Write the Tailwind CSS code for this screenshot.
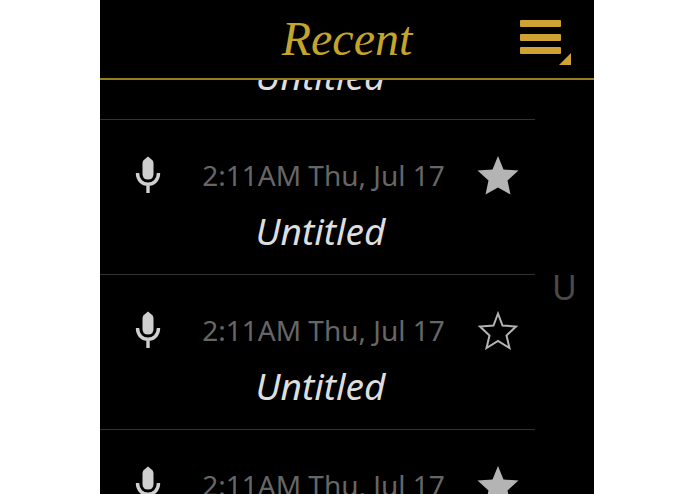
<!DOCTYPE html>
<html lang="en">
<head>
    <meta charset="UTF-8">
    <meta name="viewport" content="width=device-width, initial-scale=1.0">
    <title>Recent</title>
    <script src="https://cdn.jsdelivr.net/npm/@tailwindcss/browser@4"></script>
</head>
<body class="bg-white pl-[100px] pr-[101px] font-['Noto_Sans',sans-serif]">

    <!-- shared icons -->
    <svg class="hidden">
        <symbol id="icon-mic" viewBox="0 0 28 38">
            <path d="M14 0.500 L17 3 Q19.500 4.500 19.500 7 V18 Q19.500 23.500 14 23.500 Q8.500 23.500 8.500 18 V7 Q8.500 4.500 11 3 Z" fill="#cfcfcf"/>
            <path d="M3.500 17 C3.500 32 24.500 32 24.500 17 M14 28 V37" fill="none" stroke="#cfcfcf" stroke-width="3.400"/>
        </symbol>
        <symbol id="icon-star" viewBox="0 0 42 40">
            <path d="M21 1 L26.500 14.500 L41.500 15.500 L30.500 25.500 L33.500 39.500 L21 32.500 L8.500 39.500 L11.500 25.500 L0.500 15.500 L15.500 14.500 Z" fill="#b4b4b4"/>
        </symbol>
        <symbol id="icon-star-outline" viewBox="0 0 42 40">
            <path d="M21 3.500 L25.500 15.500 L39 16.500 L29.500 25.500 L32.500 38 L21 31 L9.500 38 L12.500 25.500 L3 16.500 L16.500 15.500 Z" fill="none" stroke="#b4b4b4" stroke-width="2"/>
        </symbol>
    </svg>

    <div class="flex h-screen flex-col overflow-hidden bg-black">
        <header class="grid h-20 shrink-0 grid-cols-[1fr_auto_1fr] items-center border-b-2 border-[#94801f] px-[22px]">
            <h1 class="col-start-2 font-['Monotype_Corsiva','Liberation_Serif',serif] text-[48px] leading-[64px] text-[#c4a52c] italic">Recent</h1>
            <button aria-label="Menu" class="justify-self-end pt-2">
                <svg class="h-[46px] w-[52px]" viewBox="0 0 52 46" fill="#cfa233">
                    <rect x="0" y="0" width="41" height="7" rx="1"/>
                    <rect x="0" y="14" width="41" height="7" rx="1"/>
                    <rect x="0" y="27" width="41" height="7" rx="1"/>
                    <path d="M51 33 V45 H39 Z"/>
                </svg>
            </button>
        </header>

        <main class="flex min-h-0 flex-1 overflow-hidden">
            <!-- list is scrolled part way into the first entry -->
            <ul class="-mt-[115px] flex-1">
                <li class="border-b border-[#333] pt-[35px] pr-4 pb-[19px] pl-[34px]">
                    <div class="flex h-10 items-center">
                        <svg class="h-[38px] w-7"><use href="#icon-mic"/></svg>
                        <time class="flex-1 pl-2 text-center text-[28px] leading-10 text-[#666]">2:11AM Thu, Jul 17</time>
                        <button aria-label="Remove star"><svg class="h-10 w-[42px]"><use href="#icon-star"/></svg></button>
                    </div>
                    <h2 class="mt-3 pr-3 text-center text-[37px] leading-[48px] text-[#dedede] italic">Untitled</h2>
                </li>
                <li class="border-b border-[#333] pt-[35px] pr-4 pb-[19px] pl-[34px]">
                    <div class="flex h-10 items-center">
                        <svg class="h-[38px] w-7"><use href="#icon-mic"/></svg>
                        <time class="flex-1 pl-2 text-center text-[28px] leading-10 text-[#666]">2:11AM Thu, Jul 17</time>
                        <button aria-label="Remove star"><svg class="h-10 w-[42px]"><use href="#icon-star"/></svg></button>
                    </div>
                    <h2 class="mt-3 pr-3 text-center text-[37px] leading-[48px] text-[#dedede] italic">Untitled</h2>
                </li>
                <li class="border-b border-[#333] pt-[35px] pr-4 pb-[19px] pl-[34px]">
                    <div class="flex h-10 items-center">
                        <svg class="h-[38px] w-7"><use href="#icon-mic"/></svg>
                        <time class="flex-1 pl-2 text-center text-[28px] leading-10 text-[#666]">2:11AM Thu, Jul 17</time>
                        <button aria-label="Add star"><svg class="h-10 w-[42px]"><use href="#icon-star-outline"/></svg></button>
                    </div>
                    <h2 class="mt-3 pr-3 text-center text-[37px] leading-[48px] text-[#dedede] italic">Untitled</h2>
                </li>
                <li class="border-b border-[#333] pt-[35px] pr-4 pb-[19px] pl-[34px]">
                    <div class="flex h-10 items-center">
                        <svg class="h-[38px] w-7"><use href="#icon-mic"/></svg>
                        <time class="flex-1 pl-2 text-center text-[28px] leading-10 text-[#666]">2:11AM Thu, Jul 17</time>
                        <button aria-label="Remove star"><svg class="h-10 w-[42px]"><use href="#icon-star"/></svg></button>
                    </div>
                    <h2 class="mt-3 pr-3 text-center text-[37px] leading-[48px] text-[#dedede] italic">Untitled</h2>
                </li>
            </ul>

            <nav class="flex w-[59px] shrink-0 items-center justify-center" aria-label="Index">
                <button class="text-[34px] leading-[48px] text-[#4a4a4a]">U</button>
            </nav>
        </main>
    </div>

</body>
</html>
